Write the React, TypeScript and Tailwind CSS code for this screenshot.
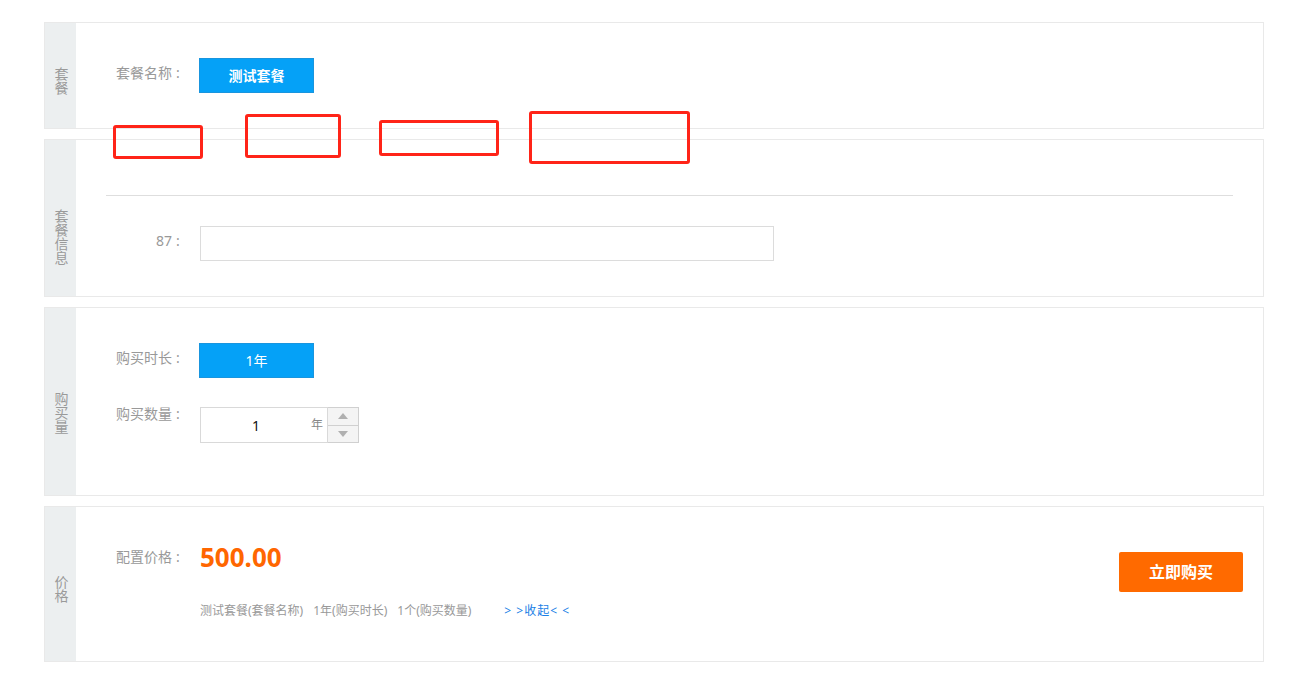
const FONT = { fontFamily: '"Noto Sans", "Noto Sans CJK SC", sans-serif' };

// red annotation boxes drawn over the form
const MARKS = [
  { left: 113, top: 125, width: 90, height: 34 },
  { left: 245, top: 114, width: 96, height: 44 },
  { left: 379, top: 120, width: 120, height: 36 },
  { left: 529, top: 111, width: 161, height: 53 },
];

function Side({ text, pt }: { text: string; pt: string }) {
  return (
    <div className={`w-[31px] shrink-0 bg-[#eceff0] flex items-center justify-center ${pt}`}>
      <span className="[writing-mode:vertical-rl] text-[14px] leading-[16px] text-[#9a9a9a]">
        {text}
      </span>
    </div>
  );
}

function Label({ text, lh }: { text: string; lh: string }) {
  return (
    <div className={`w-[80px] shrink-0 flex justify-end text-[14px] text-[#999] ${lh}`}>
      <span>{text}</span>
      <span className="w-[14px] pl-[4px]">:</span>
    </div>
  );
}

function BlueButton({ text, bold }: { text: string; bold?: boolean }) {
  return (
    <div
      className={`w-[115px] h-[35px] bg-[#05a1f7] border border-[#1995de] text-white text-[14px] flex items-center justify-center ${bold ? "font-bold" : ""}`}
    >
      {text}
    </div>
  );
}

export default function App() {
  return (
    <div className="relative min-h-[688px] bg-white" style={FONT}>
      <div className="pt-[22px] pl-[44px] w-[1264px] flex flex-col gap-[10px]">
        {/* 套餐 */}
        <section className="flex border border-[#e9e9e9] h-[107px]">
          <Side text="套餐" pt="pt-[10px]" />
          <div className="flex-1 px-[30px] pt-[35px]">
            <div className="flex gap-[13px]">
              <Label text="套餐名称" lh="leading-[30px]" />
              <BlueButton text="测试套餐" bold />
            </div>
          </div>
        </section>

        {/* 套餐信息 */}
        <section className="flex border border-[#e9e9e9] h-[158px]">
          <Side text="套餐信息" pt="pt-[37px]" />
          <div className="flex-1 px-[30px]">
            <div className="h-[55px]" />
            <div className="h-px bg-[#dedede]" />
            <div className="flex gap-[13px] mt-[30px]">
              <Label text="87" lh="leading-[30px]" />
              <div className="ml-px w-[574px] h-[35px] border border-[#dcdcdc]" />
            </div>
          </div>
        </section>

        {/* 购买量 */}
        <section className="flex border border-[#e9e9e9] h-[189px]">
          <Side text="购买量" pt="pt-[22px]" />
          <div className="flex-1 px-[30px] pt-[35px]">
            <div className="flex gap-[13px]">
              <Label text="购买时长" lh="leading-[30px]" />
              <BlueButton text="1年" />
            </div>
            <div className="flex gap-[13px] mt-[29px]">
              <Label text="购买数量" lh="leading-[14px]" />
              <div className="ml-px flex h-[36px]">
                <div className="w-[128px] h-full border border-[#d9d9d9] flex items-center text-[14px]">
                  <span className="w-[110px] text-center text-[#111]">1</span>
                  <span className="text-[12px] text-[#888]">年</span>
                </div>
                <div className="w-[31px] h-full border border-l-0 border-[#d0d0d0] flex flex-col bg-[#f4f4f4]">
                  <div className="flex-1 flex items-center justify-center border-b border-[#d0d0d0]">
                    <svg width="10" height="6" viewBox="0 0 10 6">
                      <path d="M5 0 L10 6 L0 6 Z" fill="#b0b0b0" />
                    </svg>
                  </div>
                  <div className="flex-1 flex items-center justify-center">
                    <svg width="10" height="6" viewBox="0 0 10 6">
                      <path d="M0 0 L10 0 L5 6 Z" fill="#b0b0b0" />
                    </svg>
                  </div>
                </div>
              </div>
            </div>
          </div>
        </section>

        {/* 价格 */}
        <section className="flex border border-[#e9e9e9] h-[156px]">
          <Side text="价格" pt="pt-[9px]" />
          <div className="flex-1 flex justify-between pl-[30px] pr-[20px]">
            <div className="pt-[33px]">
              <div className="flex gap-[13px] h-[34px] items-center">
                <Label text="配置价格" lh="leading-[34px]" />
                <span className="ml-px text-[26px] font-bold text-[#ff6600] leading-none">
                  500.00
                </span>
              </div>
              <div className="pl-[94px] mt-[27px] text-[12px] leading-[20px] text-[#999] flex">
                <span>测试套餐(套餐名称)</span>
                <span className="ml-[10px]">1年(购买时长)</span>
                <span className="ml-[10px]">1个(购买数量)</span>
                <span className="ml-[33px] text-[#1a80e6] tracking-[1px]">&gt; &gt;收起&lt; &lt;</span>
              </div>
            </div>
            <div className="pt-[45px]">
              <div className="w-[124px] h-[40px] bg-[#ff6a00] rounded-[2px] text-white text-[16px] font-bold flex items-center justify-center">
                立即购买
              </div>
            </div>
          </div>
        </section>
      </div>

      {MARKS.map((m, i) => (
        <div
          key={i}
          className="absolute border-[3px] border-[#ff2418] rounded-[3px]"
          style={m}
        />
      ))}
    </div>
  );
}
